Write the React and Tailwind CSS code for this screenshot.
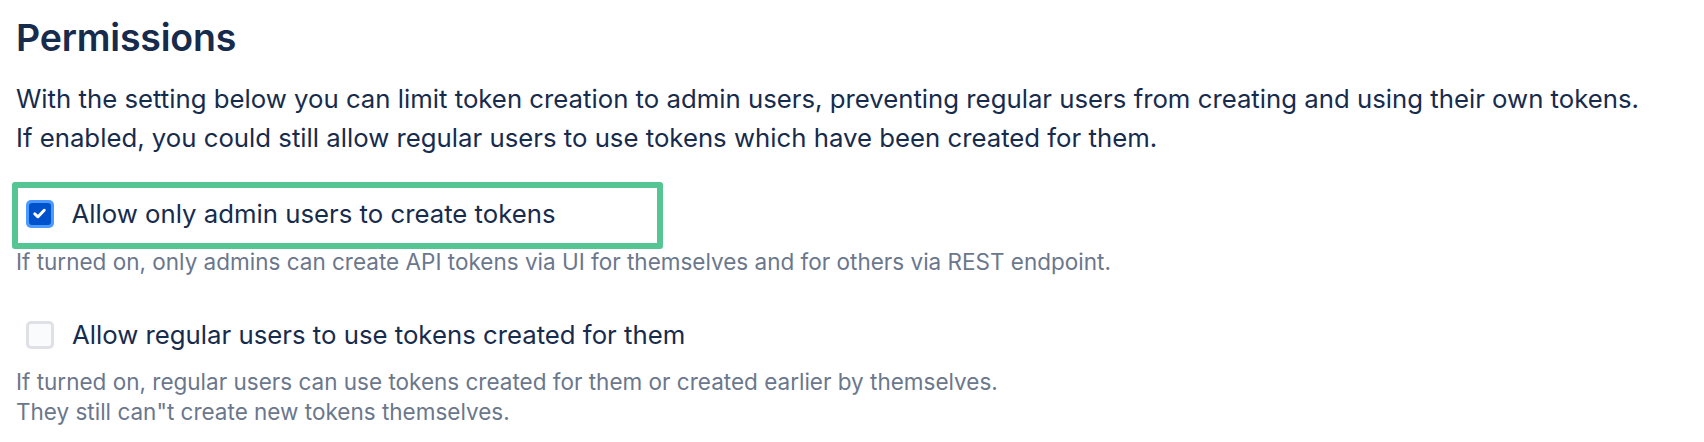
import React from 'react';

const Checkbox = ({ checked }) => {
  if (checked) {
    return (
      <span className="flex h-[28px] w-[28px] shrink-0 items-center justify-center rounded-[5px] bg-[#4c9aff] p-[3px]">
        <span className="flex h-full w-full items-center justify-center rounded-[3px] bg-[#0052cc]">
          <svg width="15" height="15" viewBox="0 0 14 14" fill="none">
            <path d="M2.6 7.3 L5.6 10.1 L11.4 3.9" stroke="white" strokeWidth="2.7" strokeLinecap="round" strokeLinejoin="round" />
          </svg>
        </span>
      </span>
    );
  }
  return <span className="block h-[28px] w-[28px] shrink-0 rounded-[5px] border-[3px] border-[#dfe1e6] bg-[#fafbfc]" />;
};

const App = () => {
  return (
    <div className="min-h-screen w-full bg-white pl-4 pt-[15px] text-[#172b4d]" style={{ fontFamily: 'Inter, "Noto Sans", sans-serif' }}>
      <h2 className="text-[37.5px] font-semibold leading-[46px] tracking-[-0.2px]">Permissions</h2>
      <p className="mt-[17.5px] text-[25.75px] leading-[39.5px]">
        With the setting below you can limit token creation to admin users, preventing regular users from creating and using their own tokens.
        <br />
        If enabled, you could still allow regular users to use tokens which have been created for them.
      </p>

      <div className="mt-[24.5px] ml-[-4px] w-[651px] rounded-[3px] border-[6.5px] border-[#55c594] pl-[7.5px]">
        <label className="flex h-[55px] items-center gap-[18px] pb-[4px]">
          <Checkbox checked />
          <span className="text-[25.75px] leading-[39px]">Allow only admin users to create tokens</span>
        </label>
      </div>
      <p className="text-[22.5px] leading-[26px] text-[#6b778c]">
        If turned on, only admins can create API tokens via UI for themselves and for others via REST endpoint.
      </p>

      <label className="mt-[40px] flex items-center gap-[18px] pl-[10px]">
        <Checkbox />
        <span className="text-[25.75px] leading-[39px]">Allow regular users to use tokens created for them</span>
      </label>
      <p className="mt-[12.5px] text-[22.5px] leading-[30px] text-[#6b778c]">
        If turned on, regular users can use tokens created for them or created earlier by themselves.
        <br />
        They still can"t create new tokens themselves.
      </p>
    </div>
  );
};

export default App;
